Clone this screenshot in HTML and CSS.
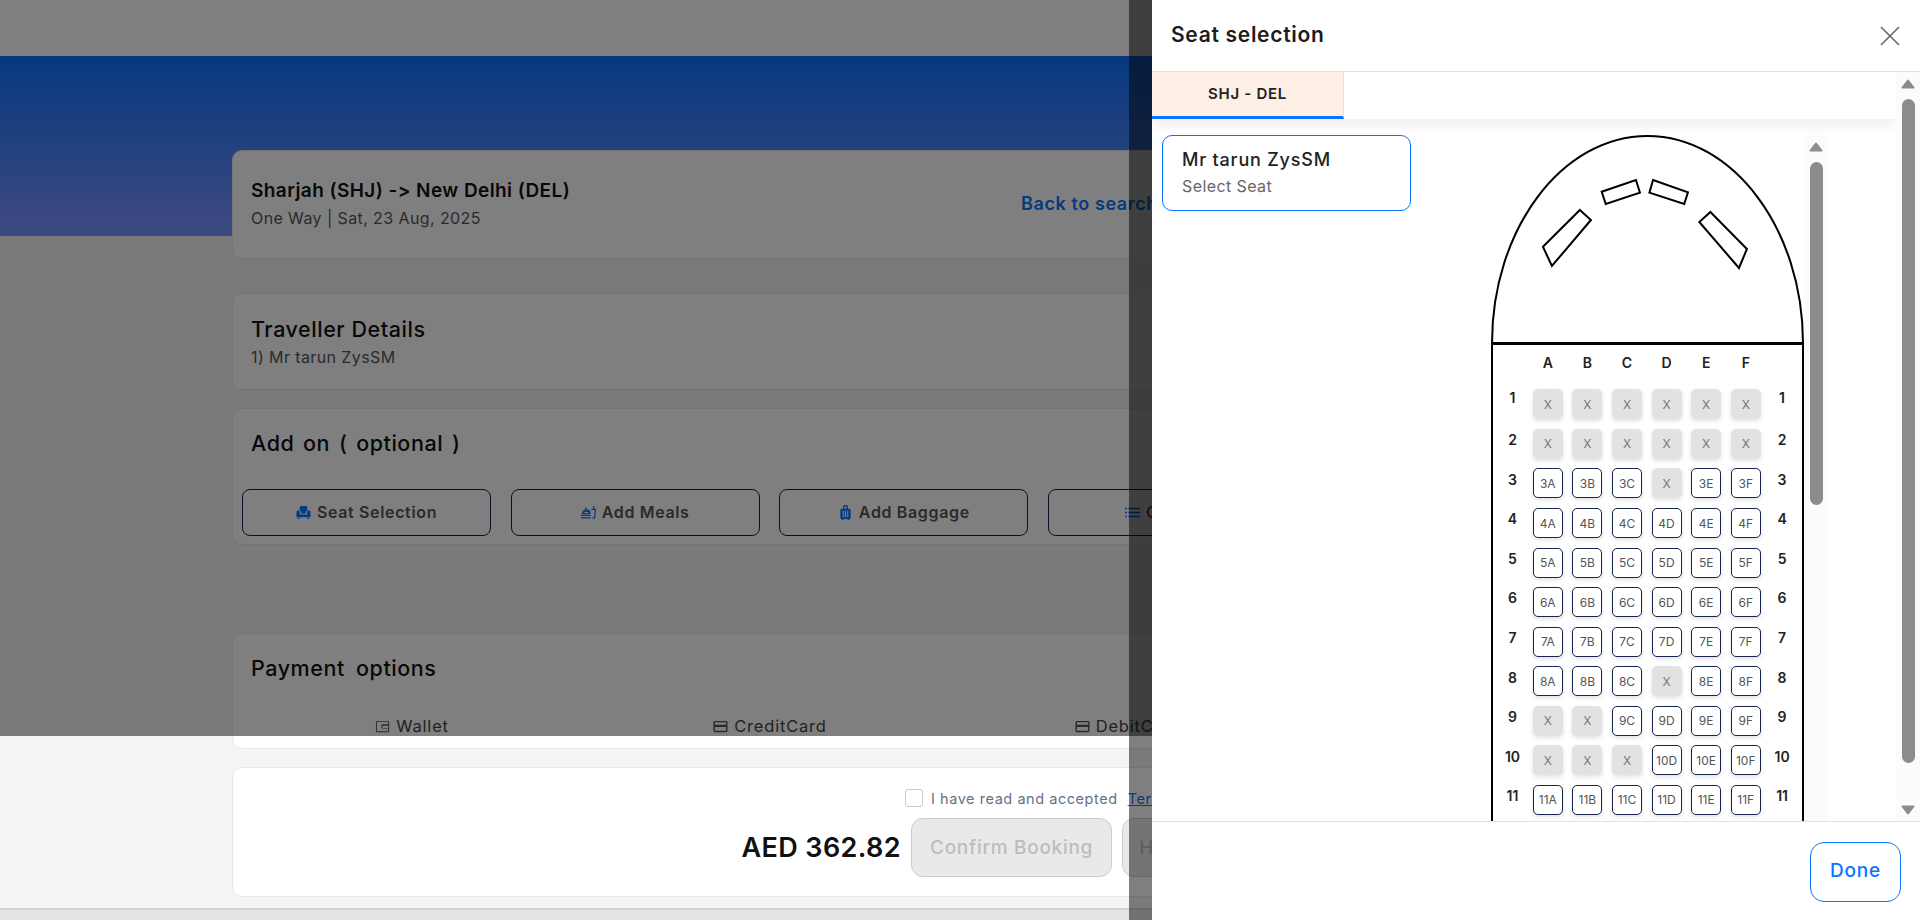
FILE: index.html
```html
<!DOCTYPE html>
<html lang="en">
<head>
    <meta charset="UTF-8">
    <title>Review booking</title>
    <link rel="stylesheet" href="styles.css">
</head>
<body>
    <div class="topbar"></div>
    <div class="hero"></div>

    <main class="container">
        <section class="card route-card">
            <div class="route-info">
                <h2 class="route-title">Sharjah (SHJ) -&gt; New Delhi (DEL)</h2>
                <p class="sub">One Way | Sat, 23 Aug, 2025</p>
            </div>
            <a class="back-link">Back to search</a>
        </section>

        <section class="card traveller-card">
            <h3 class="card-title">Traveller Details</h3>
            <p class="sub">1) Mr tarun ZysSM</p>
        </section>

        <section class="card addon-card">
            <h3 class="card-title">Add on ( optional )</h3>
            <div class="addon-row">
                <button class="addon-btn">
                    <svg class="addon-icon" viewBox="0 0 16 16"><path d="M4 2.500a1.500 1.500 0 0 1 1.500-1.500h5A1.500 1.500 0 0 1 12 2.500V6a2 2 0 0 0-1.500 2v1h-5V8A2 2 0 0 0 4 6zM.5 7.500a1.800 1.800 0 0 1 3.600 0V10h7.800V7.500a1.800 1.800 0 0 1 3.600 0V13H.5zM2 13.500h2V15H2zM12 13.500h2V15h-2z"/></svg>
                    Seat Selection
                </button>
                <button class="addon-btn">
                    <svg class="addon-icon" viewBox="0 0 16 16"><path d="M1 9.500a5 5 0 0 1 9-2.800V9.500zm2-.9h5.200a3.300 3.300 0 0 0-5.200 0zM0 10.500h10.500v1.300H0zM0 13h10.500v1.300H0zM11 4h2V1h1.300v3H16l-.8 10.300H12v-1.300h2L14.600 5.300H11z"/><circle cx="5" cy="3.500" r="1"/></svg>
                    Add Meals
                </button>
                <button class="addon-btn">
                    <svg class="addon-icon" viewBox="0 0 16 16"><path d="M5.500 4V1.500A1.500 1.500 0 0 1 7 0h2a1.500 1.500 0 0 1 1.500 1.500V4H12a1.500 1.500 0 0 1 1.500 1.500v8A1.500 1.500 0 0 1 12 15H4a1.500 1.500 0 0 1-1.500-1.500v-8A1.500 1.500 0 0 1 4 4zM7 1.300V4h2V1.300zM5 6v7h1.200V6zm2.400 0v7h1.200V6zm2.400 0v7H11V6z" fill-rule="evenodd"/><rect x="4" y="15" width="2" height="1"/><rect x="10" y="15" width="2" height="1"/></svg>
                    Add Baggage
                </button>
                <button class="addon-btn">
                    <svg class="addon-icon" viewBox="0 0 16 16"><path d="M0 3h2v1.500H0zM3.500 3H16v1.500H3.500zM0 7.200h2v1.500H0zM3.500 7.200H16v1.500H3.500zM0 11.500h2V13H0zM3.500 11.500H16V13H3.500z"/></svg>
                    Coupons
                </button>
            </div>
        </section>

        <section class="card payment-card">
            <h3 class="card-title">Payment options</h3>
            <div class="pay-tabs">
                <div class="pay-tab">
                    <svg class="pay-icon" viewBox="0 0 16 16"><path d="M2 2h12a1 1 0 0 1 1 1v10a1 1 0 0 1-1 1H2a1 1 0 0 1-1-1V3a1 1 0 0 1 1-1zm0 1v10h12v-2.500H9a2.500 2.500 0 0 1 0-5h5V3zm7 4.200a1.300 1.300 0 0 0 0 2.600h5V7.200z" fill-rule="evenodd"/></svg>
                    Wallet
                </div>
                <div class="pay-tab">
                    <svg class="pay-icon" viewBox="0 0 16 16"><path d="M2 2h12a1.500 1.500 0 0 1 1.500 1.500v9A1.500 1.500 0 0 1 14 14H2A1.500 1.500 0 0 1 .5 12.500v-9A1.500 1.500 0 0 1 2 2zm0 1.500V6h12V3.500zM2 8.500v4h12v-4z" fill-rule="evenodd"/></svg>
                    CreditCard
                </div>
                <div class="pay-tab">
                    <svg class="pay-icon" viewBox="0 0 16 16"><path d="M2 2h12a1.500 1.500 0 0 1 1.500 1.500v9A1.500 1.500 0 0 1 14 14H2A1.500 1.500 0 0 1 .5 12.500v-9A1.500 1.500 0 0 1 2 2zm0 1.500V6h12V3.500zM2 8.500v4h12v-4z" fill-rule="evenodd"/></svg>
                    DebitCard
                </div>
                <div class="pay-tab"></div>
            </div>
        </section>

        <section class="card confirm-card">
            <div class="terms-row">
                <span class="check"></span>
                <span class="terms-text">I have read and accepted</span>
                <a class="terms-link">Terms and Conditions</a>
            </div>
            <div class="price-row">
                <span class="price">AED 362.82</span>
                <button class="confirm-btn">Confirm Booking</button>
                <button class="confirm-btn">Hold Reservation</button>
            </div>
        </section>
    </main>

    <div class="page-foot"></div>

    <div class="dim"></div>
    <div class="dim-strip"></div>

    <aside class="panel">
        <header class="panel-head">
            <h2 class="panel-title">Seat selection</h2>
            <svg class="close-icon" viewBox="0 0 20 20"><path d="M1 1l18 18M19 1L1 19"/></svg>
        </header>

        <div class="panel-body">
            <div class="panel-main">
                <div class="seg-tabs">
                    <div class="seg-tab">SHJ - DEL</div>
                </div>
                <div class="seat-area">
                    <div class="pax-card">
                        <div class="pax-name">Mr tarun ZysSM</div>
                        <div class="pax-seat">Select Seat</div>
                    </div>

                    <div class="plane">
                        <svg class="nose" viewBox="0 0 311 208" preserveAspectRatio="none">
                            <path d="M1 208C1 95 70 1 155.500 1S310 95 310 208"/>
                            <polygon points="88.300,75 99.300,85 60.500,131 51.600,111.700"/>
                            <polygon points="144,45 148,57.700 114,69 110,56.700"/>
                            <polygon points="161,45 195.700,57.300 192,69 157.400,57.700"/>
                            <polygon points="218,77 254.300,114 246.400,133 207,87"/>
                        </svg>
                        <div class="cabin">
                            <span></span><b class="col">A</b><b class="col">B</b><b class="col">C</b><b class="col">D</b><b class="col">E</b><b class="col">F</b><span></span>

                            <b class="num first">1</b><i class="seat off">X</i><i class="seat off">X</i><i class="seat off">X</i><i class="seat off">X</i><i class="seat off">X</i><i class="seat off">X</i><b class="num first">1</b>
                            <b class="num">2</b><i class="seat off">X</i><i class="seat off">X</i><i class="seat off">X</i><i class="seat off">X</i><i class="seat off">X</i><i class="seat off">X</i><b class="num">2</b>
                            <b class="num">3</b><i class="seat">3A</i><i class="seat">3B</i><i class="seat">3C</i><i class="seat off">X</i><i class="seat">3E</i><i class="seat">3F</i><b class="num">3</b>
                            <b class="num">4</b><i class="seat">4A</i><i class="seat">4B</i><i class="seat">4C</i><i class="seat">4D</i><i class="seat">4E</i><i class="seat">4F</i><b class="num">4</b>
                            <b class="num">5</b><i class="seat">5A</i><i class="seat">5B</i><i class="seat">5C</i><i class="seat">5D</i><i class="seat">5E</i><i class="seat">5F</i><b class="num">5</b>
                            <b class="num">6</b><i class="seat">6A</i><i class="seat">6B</i><i class="seat">6C</i><i class="seat">6D</i><i class="seat">6E</i><i class="seat">6F</i><b class="num">6</b>
                            <b class="num">7</b><i class="seat">7A</i><i class="seat">7B</i><i class="seat">7C</i><i class="seat">7D</i><i class="seat">7E</i><i class="seat">7F</i><b class="num">7</b>
                            <b class="num">8</b><i class="seat">8A</i><i class="seat">8B</i><i class="seat">8C</i><i class="seat off">X</i><i class="seat">8E</i><i class="seat">8F</i><b class="num">8</b>
                            <b class="num">9</b><i class="seat off">X</i><i class="seat off">X</i><i class="seat">9C</i><i class="seat">9D</i><i class="seat">9E</i><i class="seat">9F</i><b class="num">9</b>
                            <b class="num">10</b><i class="seat off">X</i><i class="seat off">X</i><i class="seat off">X</i><i class="seat">10D</i><i class="seat">10E</i><i class="seat">10F</i><b class="num">10</b>
                            <b class="num">11</b><i class="seat">11A</i><i class="seat">11B</i><i class="seat">11C</i><i class="seat">11D</i><i class="seat">11E</i><i class="seat">11F</i><b class="num">11</b>
                        </div>
                    </div>

                    <div class="scroll inner-scroll">
                        <svg class="arrow" viewBox="0 0 14 10"><path d="M7 1.500L12.500 8.500H1.500z"/></svg>
                        <div class="thumb inner-thumb"></div>
                    </div>
                </div>
            </div>

            <div class="scroll outer-scroll">
                <svg class="arrow" viewBox="0 0 14 10"><path d="M7 1.500L12.500 8.500H1.500z"/></svg>
                <div class="thumb outer-thumb"></div>
                <svg class="arrow arrow-down" viewBox="0 0 14 10"><path d="M7 8.500L12.500 1.500H1.500z"/></svg>
            </div>
        </div>

        <footer class="panel-foot">
            <button class="done-btn">Done</button>
        </footer>
    </aside>
</body>
</html>
```

FILE: styles.css
```css
* { box-sizing: border-box; }
html, body { margin: 0; height: 920px; overflow: hidden; }
body { font-family: Inter, "Noto Sans", sans-serif; font-feature-settings: "calt" 0; background-color: #f5f5f5; color: #1a1a1a; }
h2, h3, p { margin: 0; }
button { font-family: inherit; font-feature-settings: inherit; cursor: pointer; }

/* page behind the drawer */
.topbar { height: 56px; background-color: #fff; }
.hero { height: 180px; background: linear-gradient(180deg, #0e72ff 0%, #7e94ff 100%); }
.container { width: 1456px; margin: -86px auto 0; }
.card { background-color: #fff; border: 1px solid #e8e8e8; border-radius: 10px; }
.route-card { height: 109px; display: flex; align-items: center; padding: 0 0 2px 18px; }
.route-info { width: 770px; }
.route-title { font-size: 19px; line-height: 26px; font-weight: 600; letter-spacing: 0.42px; color: #111; }
.sub { font-size: 16px; line-height: 22px; letter-spacing: 0.4px; color: #555; margin-top: 3px; }
.back-link { font-size: 18px; font-weight: 600; letter-spacing: 0.6px; color: #0a74ff; white-space: nowrap; }
.traveller-card { height: 97px; margin-top: 34px; padding: 20px 18px 0; }
.traveller-card .sub { margin-top: 2px; }
.card-title { font-size: 21.5px; line-height: 30px; font-weight: 500; letter-spacing: 0.55px; color: #111; }
.addon-card { height: 137px; margin-top: 18px; padding: 19px 9px 0; }
.addon-card .card-title { padding-left: 9px; word-spacing: 2.5px; }
.addon-row { display: flex; gap: 19.67px; margin-top: 31px; }
.addon-btn { width: 249px; height: 47px; flex: none; display: flex; align-items: center; justify-content: center; gap: 6px; padding-bottom: 2px; background: none; border: 1px solid #152044; border-radius: 8px; font-size: 16px; font-weight: 600; letter-spacing: 0.65px; color: #555; white-space: nowrap; }
.addon-icon { width: 15px; height: 15px; fill: #0a74ff; flex: none; }
.payment-card { height: 116px; margin-top: 88px; padding-top: 19px; }
.payment-card .card-title { padding-left: 18px; word-spacing: 5px; }
.pay-tabs { display: flex; margin-top: 32px; }
.pay-tab { width: 358px; display: flex; align-items: center; justify-content: center; gap: 6px; font-size: 16.5px; line-height: 22px; letter-spacing: 0.8px; color: #444; }
.pay-icon { width: 15px; height: 15px; fill: #555; flex: none; }
.confirm-card { height: 130px; margin-top: 18px; padding-top: 21px; }
.terms-row { display: flex; align-items: center; height: 18px; padding-left: 672px; }
.check { width: 18px; height: 18px; border: 1px solid #ccc; border-radius: 3px; flex: none; }
.terms-text { font-size: 14.5px; letter-spacing: 0.55px; color: #667085; margin-left: 8px; white-space: nowrap; }
.terms-link { font-size: 14.5px; letter-spacing: 0.55px; color: #0a74ff; text-decoration: underline; margin-left: 10px; white-space: nowrap; }
.price-row { display: flex; align-items: center; justify-content: flex-end; gap: 10px; margin-top: 11px; padding-right: 364px; }
.price { font-size: 27px; font-weight: 600; letter-spacing: 0.4px; color: #111; white-space: nowrap; }
.confirm-btn { width: 201px; height: 59px; padding: 0; flex: none; background-color: #e9e9e9; border: 1px solid #ccc; border-radius: 12px; font-size: 19px; font-weight: 500; letter-spacing: 0.7px; color: #bdbdbd; white-space: nowrap; }
.page-foot { height: 12px; margin-top: 11px; border-top: 2px solid #cfd0d6; background-color: #e3e4e6; }

/* drawer and its backdrops */
.dim { position: absolute; left: 0; top: 0; width: 1920px; height: 736px; background-color: rgba(0, 0, 0, 0.5); }
.dim-strip { position: absolute; left: 1129px; top: 0; width: 23px; height: 920px; background-color: rgba(0, 0, 0, 0.5); }
.panel { position: absolute; left: 1152px; top: 0; width: 768px; height: 920px; background-color: #fff; display: flex; flex-direction: column; }
.panel-head { height: 72px; flex: none; display: flex; align-items: center; justify-content: space-between; padding: 0 20px 2px 19px; border-bottom: 1px solid #e2e2e2; }
.panel-title { font-size: 21px; font-weight: 600; letter-spacing: 0.7px; color: #1c1c24; }
.close-icon { width: 20px; height: 20px; margin-top: 2px; fill: none; stroke: #666; stroke-width: 1.6; }
.panel-body { height: 749px; flex: none; display: flex; overflow: hidden; }
.panel-main { width: 744px; flex: none; }
.seg-tabs { height: 47px; background-color: #fff; box-shadow: 0 6px 12px rgba(0, 0, 0, 0.07); }
.seg-tab { width: 192px; height: 47px; display: flex; align-items: center; justify-content: center; padding-bottom: 2px; background-color: #fdefe6; border-right: 1px solid #eadfd8; border-bottom: 3px solid #0a74ff; font-size: 15px; font-weight: 600; letter-spacing: 0.7px; color: #222; }
.seat-area { display: flex; align-items: flex-start; padding: 16px 0 0 10px; }
.pax-card { width: 249px; height: 76px; flex: none; padding: 10px 20px 0 19px; border: 1px solid #0a74ff; border-radius: 10px; }
.pax-name { font-size: 18px; line-height: 28px; font-weight: 500; letter-spacing: 0.8px; color: #222; white-space: nowrap; }
.pax-seat { font-size: 16px; line-height: 25px; letter-spacing: 0.4px; color: #666; white-space: nowrap; }

.plane { width: 313px; flex: none; margin-left: 80px; }
.nose { display: block; width: 313px; height: 208px; fill: none; stroke: #000; stroke-width: 2; }
.cabin { display: grid; grid-template-columns: 31px repeat(6, 39.6px) 33px; grid-auto-rows: 39.57px; height: 480px; padding-left: 4px; border: 2px solid #000; border-top-width: 3px; border-bottom: 0; margin-top: -1px; }
.col { justify-self: center; font-size: 14px; line-height: 36px; font-weight: 600; font-style: normal; color: #222; }
.num { justify-self: center; font-size: 14px; line-height: 32.6px; font-weight: 600; color: #222; }
.num.first { line-height: 26px; }
.seat { width: 30px; height: 30px; justify-self: center; align-self: center; display: flex; align-items: center; justify-content: center; border: 1px solid #17244f; border-radius: 5px; font-size: 12px; font-style: normal; color: #555; background-color: #fff; box-shadow: 0 2px 4px rgba(0, 0, 0, 0.12); }
.seat.off { background-color: #e2e2e2; border-color: #e2e2e2; color: #777; }

/* scrollbars are drawn, so they stay the same in any browser */
.scroll { display: flex; flex-direction: column; align-items: center; background-color: #fbfbfb; }
.inner-scroll { width: 22px; height: 700px; flex: none; margin-left: 1px; padding-top: 7px; }
.outer-scroll { width: 24px; height: 749px; flex: none; padding-top: 7px; }
.arrow { width: 14px; height: 10px; flex: none; fill: #8c8c8c; stroke: #8c8c8c; stroke-width: 2; stroke-linejoin: round; }
.thumb { background-color: #8c8c8c; border-radius: 7px; flex: none; }
.inner-thumb { width: 13px; height: 343px; margin-top: 10px; }
.outer-thumb { width: 13px; height: 664px; margin-top: 10px; margin-left: 1px; }
.arrow-down { margin-top: 42px; }

.panel-foot { flex: 1; display: flex; justify-content: flex-end; padding: 20px 19px 0 0; border-top: 1px solid #e2e2e2; }
.done-btn { width: 91px; height: 60px; padding: 0 0 4px; background-color: #fff; border: 1px solid #0a74ff; border-radius: 14px; font-size: 19px; font-weight: 500; letter-spacing: 0.8px; color: #0a74ff; }
```
